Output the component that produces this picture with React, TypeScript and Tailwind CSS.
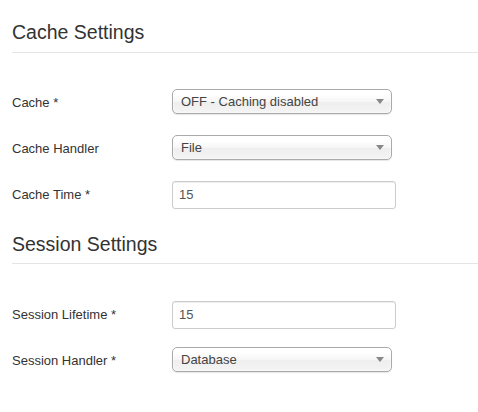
const font = { fontFamily: '"Liberation Sans", Arial, sans-serif' };

function Legend({ title, className = "" }: { title: string; className?: string }) {
  return (
    <div
      className={`text-[19.5px] leading-[23px] text-[#333] pb-[8px] border-b border-[#e5e5e5] ${className}`}
    >
      {title}
    </div>
  );
}

function FakeSelect({ value }: { value: string }) {
  return (
    <div className="relative w-[220px] h-[25px] rounded-[5px] border border-[#aaa] bg-[linear-gradient(#fff_20%,#f6f6f6_50%,#eee_52%,#f4f4f4_100%)] shadow-[0_1px_1px_rgba(0,0,0,0.1),inset_0_0_3px_#fff] pl-[8px] text-[13px] leading-[23px] text-[#444]">
      {value}
      <span className="absolute right-[7px] top-[9px] w-0 h-0 border-l-[4px] border-r-[4px] border-t-[5px] border-l-transparent border-r-transparent border-t-[#888]" />
    </div>
  );
}

function FakeInput({ value }: { value: string }) {
  return (
    <div className="w-[224px] h-[28px] rounded-[3px] border border-[#ccc] bg-white shadow-[inset_0_1px_1px_rgba(0,0,0,0.075)] px-[6px] py-[4px] text-[13px] leading-[18px] text-[#555]">
      {value}
    </div>
  );
}

function Row({ label, children, last }: { label: string; children: React.ReactNode; last?: boolean }) {
  return (
    <div className={`flex h-[28px] ${last ? "" : "mb-[18px]"}`}>
      <div className="w-[160px] shrink-0 pt-[5px] text-[13px] leading-[18px] text-[#333]">{label}</div>
      <div>{children}</div>
    </div>
  );
}

export default function App() {
  return (
    <div className="w-[478px] h-[412px] bg-white pl-[12px] overflow-hidden" style={font}>
      <Legend title="Cache Settings" className="pt-[21px]" />
      <div className="mt-[36px]">
        <Row label="Cache *">
          <FakeSelect value="OFF - Caching disabled" />
        </Row>
        <Row label="Cache Handler">
          <FakeSelect value="File" />
        </Row>
        <Row label="Cache Time *" last>
          <FakeInput value="15" />
        </Row>
      </div>
      <Legend title="Session Settings" className="mt-[24px] !pb-[7px]" />
      <div className="mt-[37px]">
        <Row label="Session Lifetime *">
          <FakeInput value="15" />
        </Row>
        <Row label="Session Handler *" last>
          <FakeSelect value="Database" />
        </Row>
      </div>
    </div>
  );
}
